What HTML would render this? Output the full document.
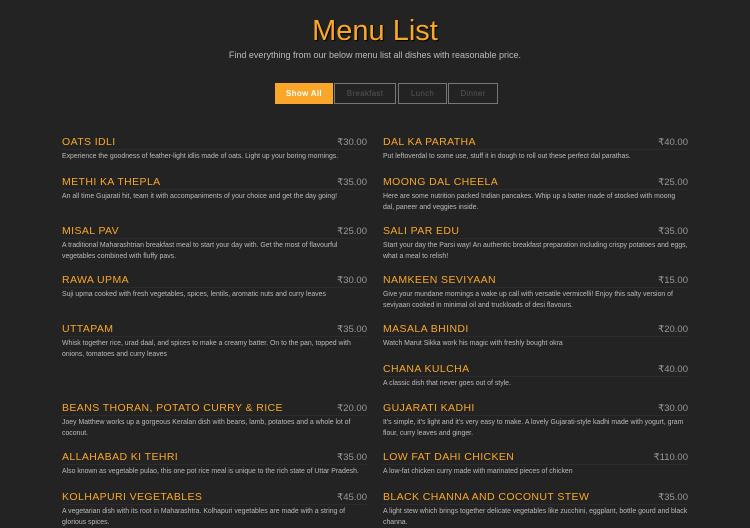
<!DOCTYPE html>
<html><head><style>
body{margin:0;width:750px;height:510px;overflow:hidden;background:#232323;font-family:"Liberation Sans",sans-serif;position:relative}
h1{position:absolute;top:15px;left:0;width:750px;text-align:center;margin:0;font-weight:normal;font-size:29px;color:#f9a72b;text-shadow:1px 1px 1px #000}
.sub{position:absolute;top:50px;left:0;width:750px;text-align:center;font-size:9px;color:#bbb}
.btn{position:absolute;top:83px;height:19px;border:1px solid #777;font-size:8px;color:#555;display:flex;align-items:center;justify-content:center;letter-spacing:.3px}
.btn.on{background:#f9a72b;border-color:#f9a72b;color:#fff;font-weight:bold}
.it{position:absolute;width:305px}
.t{display:flex;justify-content:space-between;align-items:baseline;border-bottom:1px solid #2b2b2b;height:13px}
.n{color:#f9a72b;font-size:10.5px;letter-spacing:.4px;text-transform:uppercase}
.p{color:#999;font-size:9.5px}
.d{color:#bbb;font-size:6.9px;line-height:11px;margin-top:1px}
</style></head><body>
<h1>Menu List</h1>
<div class="sub">Find everything from our below menu list all dishes with reasonable price.</div>
<div class="btn on" style="left:275px;width:56px">Show All</div>
<div class="btn" style="left:334px;width:60px">Breakfast</div>
<div class="btn" style="left:398px;width:47px">Lunch</div>
<div class="btn" style="left:448px;width:48px">Dinner</div>

<div class="it" style="left:62px;top:136px"><div class="t"><span class="n">Oats Idli</span><span class="p">₹30.00</span></div><div class="d">Experience the goodness of feather-light idlis made of oats. Light up your boring mornings.</div></div>
<div class="it" style="left:62px;top:176px"><div class="t"><span class="n">Methi Ka Thepla</span><span class="p">₹35.00</span></div><div class="d">An all time Gujarati hit, team it with accompaniments of your choice and get the day going!</div></div>
<div class="it" style="left:62px;top:225px"><div class="t"><span class="n">Misal Pav</span><span class="p">₹25.00</span></div><div class="d">A traditional Maharashtrian breakfast meal to start your day with. Get the most of flavourful vegetables combined with fluffy pavs.</div></div>
<div class="it" style="left:62px;top:274px"><div class="t"><span class="n">Rawa Upma</span><span class="p">₹30.00</span></div><div class="d">Suji upma cooked with fresh vegetables, spices, lentils, aromatic nuts and curry leaves</div></div>
<div class="it" style="left:62px;top:323px"><div class="t"><span class="n">Uttapam</span><span class="p">₹35.00</span></div><div class="d">Whisk together rice, urad daal, and spices to make a creamy batter. On to the pan, topped with onions, tomatoes and curry leaves</div></div>
<div class="it" style="left:62px;top:402px"><div class="t"><span class="n">Beans Thoran, Potato Curry &amp; Rice</span><span class="p">₹20.00</span></div><div class="d">Joey Matthew works up a gorgeous Keralan dish with beans, lamb, potatoes and a whole lot of coconut.</div></div>
<div class="it" style="left:62px;top:451px"><div class="t"><span class="n">Allahabad Ki Tehri</span><span class="p">₹35.00</span></div><div class="d">Also known as vegetable pulao, this one pot rice meal is unique to the rich state of Uttar Pradesh.</div></div>
<div class="it" style="left:62px;top:491px"><div class="t"><span class="n">Kolhapuri Vegetables</span><span class="p">₹45.00</span></div><div class="d">A vegetarian dish with its root in Maharashtra. Kolhapuri vegetables are made with a string of glorious spices.</div></div>

<div class="it" style="left:383px;top:136px"><div class="t"><span class="n">Dal Ka Paratha</span><span class="p">₹40.00</span></div><div class="d">Put leftoverdal to some use, stuff it in dough to roll out these perfect dal parathas.</div></div>
<div class="it" style="left:383px;top:176px"><div class="t"><span class="n">Moong Dal Cheela</span><span class="p">₹25.00</span></div><div class="d">Here are some nutrition packed Indian pancakes. Whip up a batter made of stocked with moong dal, paneer and veggies inside.</div></div>
<div class="it" style="left:383px;top:225px"><div class="t"><span class="n">Sali Par Edu</span><span class="p">₹35.00</span></div><div class="d">Start your day the Parsi way! An authentic breakfast preparation including crispy potatoes and eggs, what a meal to relish!</div></div>
<div class="it" style="left:383px;top:274px"><div class="t"><span class="n">Namkeen Seviyaan</span><span class="p">₹15.00</span></div><div class="d">Give your mundane mornings a wake up call with versatile vermicelli! Enjoy this salty version of seviyaan cooked in minimal oil and truckloads of desi flavours.</div></div>
<div class="it" style="left:383px;top:323px"><div class="t"><span class="n">Masala Bhindi</span><span class="p">₹20.00</span></div><div class="d">Watch Marut Sikka work his magic with freshly bought okra</div></div>
<div class="it" style="left:383px;top:363px"><div class="t"><span class="n">Chana Kulcha</span><span class="p">₹40.00</span></div><div class="d">A classic dish that never goes out of style.</div></div>
<div class="it" style="left:383px;top:402px"><div class="t"><span class="n">Gujarati Kadhi</span><span class="p">₹30.00</span></div><div class="d">It's simple, it's light and it's very easy to make. A lovely Gujarati-style kadhi made with yogurt, gram flour, curry leaves and ginger.</div></div>
<div class="it" style="left:383px;top:451px"><div class="t"><span class="n">Low Fat Dahi Chicken</span><span class="p">₹110.00</span></div><div class="d">A low-fat chicken curry made with marinated pieces of chicken</div></div>
<div class="it" style="left:383px;top:491px"><div class="t"><span class="n">Black Channa and Coconut Stew</span><span class="p">₹35.00</span></div><div class="d">A light stew which brings together delicate vegetables like zucchini, eggplant, bottle gourd and black channa.</div></div>
</body></html>
